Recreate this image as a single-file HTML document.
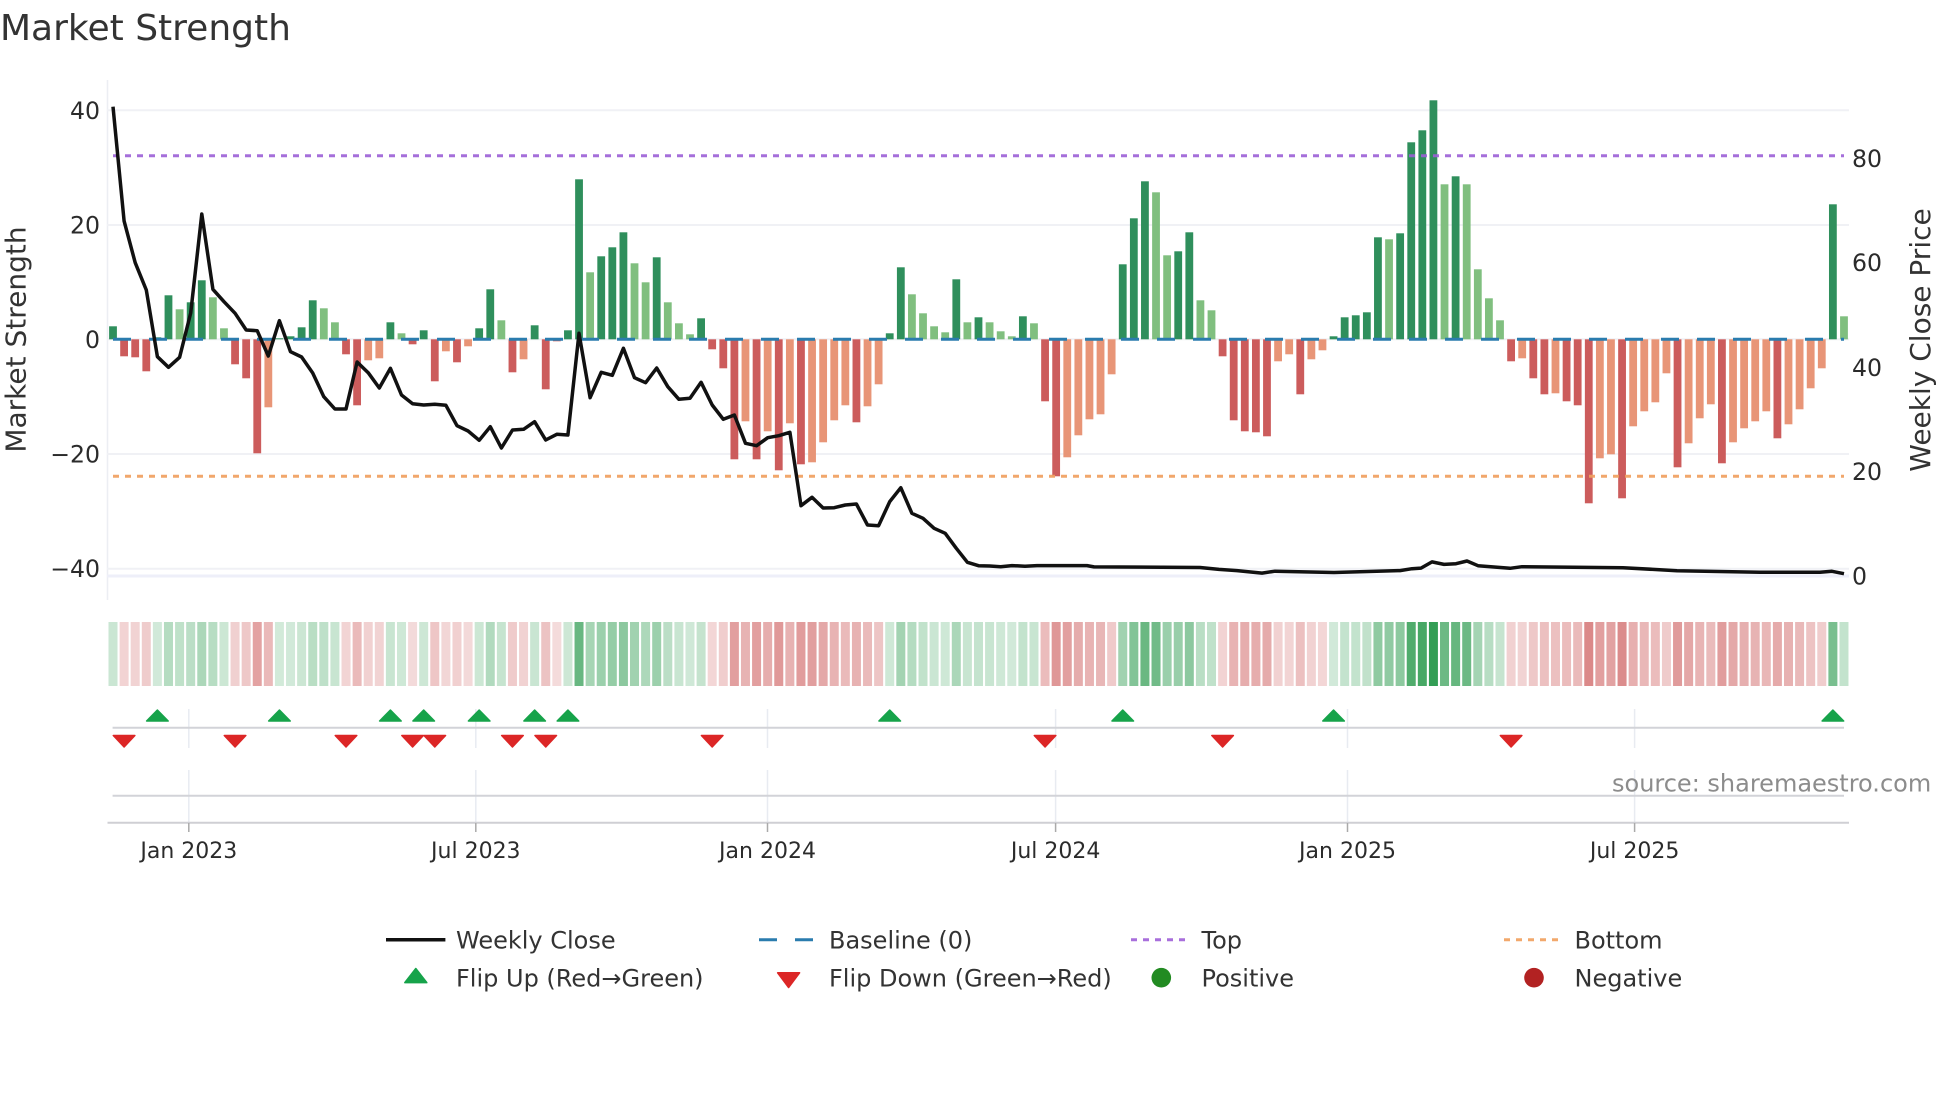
<!DOCTYPE html>
<html><head><meta charset="utf-8"><title>Market Strength</title>
<style>
html,body{margin:0;padding:0;background:#fff;width:1960px;height:1102px;overflow:hidden}
svg{display:block}
text{font-family:"DejaVu Sans","Liberation Sans",sans-serif;fill:#333}
.t{font-size:22px;fill:#2b2b2b}
.y{font-size:23.6px;fill:#2b2b2b}
.l{font-size:24px;fill:#333}
.a{font-size:28px;fill:#333}
</style></head>
<body>
<svg id="c" xmlns="http://www.w3.org/2000/svg" width="1960" height="1102" viewBox="0 0 1960 1102">
<rect width="1960" height="1102" fill="#fff"/>
<text x="0" y="40" style="font-size:36px" fill="#333">Market Strength</text>

<g stroke="#f0f1f5" stroke-width="2" fill="none">
<path d="M107.5 80V600" stroke="#eceef3" stroke-width="1.5"/>
<path d="M107 110.3H1849M107 225H1849M107 339.3H1849M107 454H1849M107 568.7H1849"/>
<path d="M107 576H1849" stroke="#eeeff9" stroke-width="3"/>
</g>

<g id="bars"></g>

<path d="M113 155.7H1844" stroke="#9b5fd6" stroke-width="3" stroke-dasharray="6 6" fill="none" opacity=".9"/>
<path d="M113 476.3H1844" stroke="#f0a060" stroke-width="3" stroke-dasharray="6 6" fill="none" opacity=".92"/>
<path d="M113 339.3H1844" stroke="#2a7cae" stroke-width="3" stroke-dasharray="18 18" fill="none"/>
<path id="pl" fill="none" stroke="#111" stroke-width="3.5" stroke-linejoin="round" d=""/>

<g id="heat"></g>

<g stroke="#e8ebf1" stroke-width="1.5" fill="none">
<path d="M188.8 709V748M188.8 770V822M475.8 709V748M475.8 770V822M767.5 709V748M767.5 770V822M1055.6 709V748M1055.6 770V822M1347.5 709V748M1347.5 770V822M1634.6 709V748M1634.6 770V822"/>
</g>
<path d="M112.6 727.7H1844M112.6 795.7H1844" stroke="#d2d3d8" stroke-width="2" fill="none"/>
<path d="M107.5 822.7H1849" stroke="#cfcfd4" stroke-width="2" fill="none"/>
<path d="M188.8 823V832M475.8 823V832M767.5 823V832M1055.6 823V832M1347.5 823V832M1634.6 823V832" stroke="#aaa" stroke-width="1.5" fill="none"/>

<g id="flips"></g>

<g>
<text class="y" x="100" y="118.8" text-anchor="end">40</text>
<text class="y" x="100" y="233.5" text-anchor="end">20</text>
<text class="y" x="100" y="347.8" text-anchor="end">0</text>
<text class="y" x="100" y="462.5" text-anchor="end">−20</text>
<text class="y" x="100" y="577.2" text-anchor="end">−40</text>
</g>
<g>
<text class="y" x="1852" y="166.8">80</text>
<text class="y" x="1852" y="271.2">60</text>
<text class="y" x="1852" y="375.8">40</text>
<text class="y" x="1852" y="480.2">20</text>
<text class="y" x="1852" y="584.5">0</text>
</g>
<text class="a" transform="translate(25.5 339.5) rotate(-90)" text-anchor="middle">Market Strength</text>
<text class="a" transform="translate(1930 340) rotate(-90)" text-anchor="middle">Weekly Close Price</text>

<g>
<text class="t" x="188.8" y="858" text-anchor="middle">Jan 2023</text>
<text class="t" x="475.8" y="858" text-anchor="middle">Jul 2023</text>
<text class="t" x="767.5" y="858" text-anchor="middle">Jan 2024</text>
<text class="t" x="1055.6" y="858" text-anchor="middle">Jul 2024</text>
<text class="t" x="1347.5" y="858" text-anchor="middle">Jan 2025</text>
<text class="t" x="1634.6" y="858" text-anchor="middle">Jul 2025</text>
</g>

<text x="1612" y="791.7" style="font-size:24px;fill:#8c8c8c">source: sharemaestro.com</text>

<path d="M386 939.7H445.4" stroke="#111" stroke-width="3.5" fill="none"/>
<text class="l" x="456" y="948.7">Weekly Close</text>
<path d="M759 939.7H813" stroke="#2a7cae" stroke-width="3" stroke-dasharray="18 18" fill="none"/>
<text class="l" x="829" y="948.7">Baseline (0)</text>
<path d="M1131 939.7H1186" stroke="#a86fdc" stroke-width="3" stroke-dasharray="6 6" fill="none"/>
<text class="l" x="1201.5" y="948.7">Top</text>
<path d="M1504 939.7H1559" stroke="#f2a86c" stroke-width="3" stroke-dasharray="6 6" fill="none"/>
<text class="l" x="1574.5" y="948.7">Bottom</text>

<polygon points="415.8,968.5 404.8,982.6 426.8,982.6" fill="#16a34a" stroke="#16a34a" stroke-width="1.5" stroke-linejoin="round"/>
<text class="l" x="456" y="986.7">Flip Up (Red→Green)</text>
<polygon points="788.6,987.5 777.6,972.8 799.6,972.8" fill="#dc2626" stroke="#dc2626" stroke-width="1.5" stroke-linejoin="round"/>
<text class="l" x="829" y="986.7">Flip Down (Green→Red)</text>
<circle cx="1161.3" cy="977.7" r="9.8" fill="#228b22"/>
<text class="l" x="1201.5" y="986.7">Positive</text>
<circle cx="1534" cy="977.7" r="9.8" fill="#b22222"/>
<text class="l" x="1574.5" y="986.7">Negative</text>
</svg>
<script>
var NS="http://www.w3.org/2000/svg",S=11.096,X0=113,Z=339.3;
var raw="13 -17 -18 -32 2 44 30l 37 59 42l 11l -25 -39 -114 -68l 1 3 12 39 31l 17l -15 -66 -21l -19l 17 6l -5 9 -42 -12l -23 -7l 11 50 19l -33 -20l 14 -50 -2 9 160 67l 83 92 107 76l 57l 82 37l 16l 5l 21 -10 -29 -120 -82l -120 -92l -131 -84l -125 -123l -103l -81l -66l -83 -67l -45l 6 72 45l 26l 13l 7l 60 17l 22 17l 8l 3l 23 16l -62 -137 -118l -96l -80l -75l -35l 75 121 158 147l 84l 88 107 39l 29l -17 -81 -92 -93 -97 -22l -15l -55 -20l -11l 3 22 24 27 102 100l 106 197 209 239 155l 163 155l 70l 41l 19l -22 -19l -39 -55 -54l -62 -66 -164 -119l -115l -159 -87l -72l -63l -34l -128 -104l -79l -65l -124 -103l -89l -82l -72l -99 -85l -70l -49l -29l 135 23l".split(" ");
function el(n,a,p){var e=document.createElementNS(NS,n);for(var k in a)e.setAttribute(k,a[k]);p.appendChild(e);return e}
var bars=document.getElementById("bars"),heat=document.getElementById("heat");
raw.forEach(function(s,i){
  var light=s.slice(-1)==="l",v=parseFloat(s),x=X0+S*i,h=Math.abs(v);
  var col=v>=0?(light?"#80bf7f":"#2f8f5c"):(light?"#e89577":"#cc5c5c");
  el("rect",{x:(x-3.9).toFixed(2),y:(v>=0?Z-h:Z).toFixed(2),width:7.8,height:h,fill:col},bars);
  var a=v>=0?0.2+0.72*h/239:0.18+0.62*h/239;
  el("rect",{x:(x-4.5).toFixed(2),y:622,width:9,height:64,fill:v>=0?"rgb(34,150,70)":"rgb(195,60,60)","fill-opacity":a.toFixed(3)},heat);
});
var ys=[106.7,221,262.7,290,356.7,367.3,357.3,313,214,289.3,301.7,313.3,330,330.7,356,320.7,351.7,357,373,396.7,409,409,362,372.7,388,368.3,395,403.7,405,404.3,405.3,425.7,431,440.3,426.7,448,430,429.3,421.7,440,434.3,435,333.3,397.7,372.3,375.3,348.3,377.7,382.7,368,386.7,399.3,398.3,382.3,405,419.3,415,443.3,445.7,437.7,435.7,432.3,505.7,497.3,508,507.7,505,504,525,525.7,501.7,487.7,513.3,518.3,528.3,533.3,548.3,562.3,565.7,566,566.7];
var d=ys.map(function(y,i){return (i?"L":"M")+(X0+S*i).toFixed(1)+" "+y}).join("");
[[1012,565.6],[1025,566.2],[1037,565.6],[1087,565.6],[1094,566.9],[1200,567.5],[1219,569.4],[1237,570.6],[1262,573.1],[1275,571.2],[1334,572.5],[1400,570.6],[1412,568.7],[1421,568.1],[1432,561.9],[1444,564.4],[1456,563.7],[1467,561],[1478,565.7],[1510,568.3],[1522,566.7],[1623,567.7],[1677,570.7],[1760,572.3],[1820,572.3],[1832,571.3],[1844,573.7]].forEach(function(p){d+="L"+p[0]+" "+p[1]});
document.getElementById("pl").setAttribute("d",d);
var fl=document.getElementById("flips");
[4,15,25,28,33,38,41,70,91,110,155].forEach(function(i){var x=X0+S*i;
  el("polygon",{points:x+",710 "+(x-10.8)+",721 "+(x+10.8)+",721",fill:"#16a34a",stroke:"#16a34a","stroke-width":1.5,"stroke-linejoin":"round"},fl)});
[1,11,21,27,29,36,39,54,84,100,126].forEach(function(i){var x=X0+S*i;
  el("polygon",{points:x+",747 "+(x-10.8)+",735.5 "+(x+10.8)+",735.5",fill:"#dc2626",stroke:"#dc2626","stroke-width":1.5,"stroke-linejoin":"round"},fl)});
</script>
</body></html>
